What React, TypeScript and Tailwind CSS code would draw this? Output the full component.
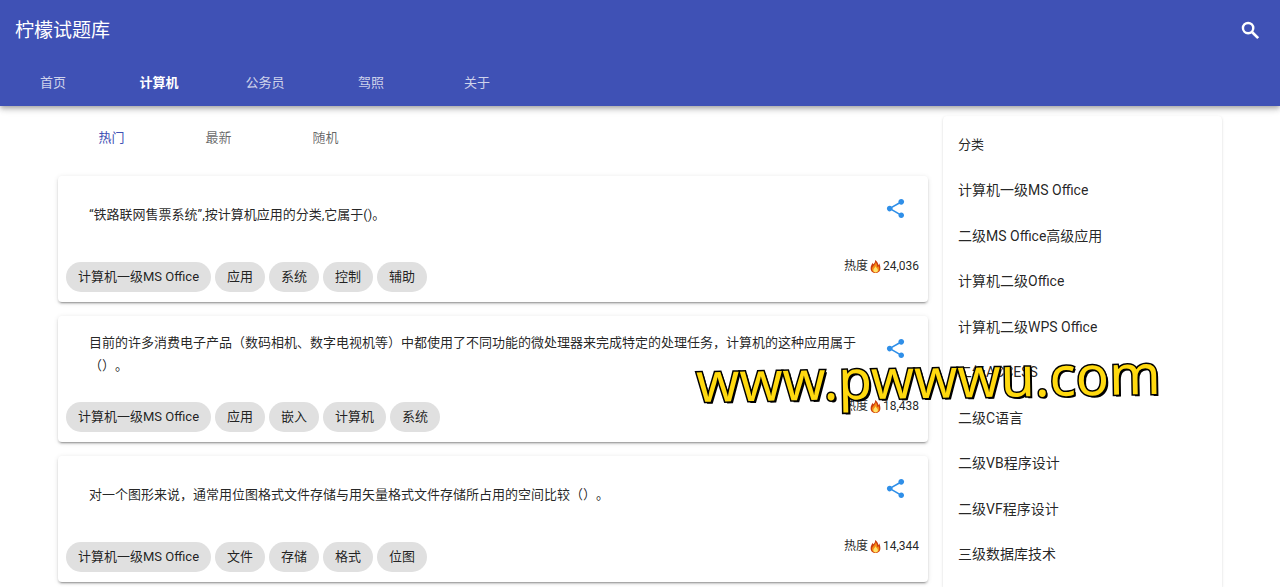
import { useState } from "react";
import { MdShare } from "react-icons/md";

const sections = ["首页", "计算机", "公务员", "驾照", "关于"];
const orders = ["热门", "最新", "随机"];

const categories = [
  "计算机一级MS Office",
  "二级MS Office高级应用",
  "计算机二级Office",
  "计算机二级WPS Office",
  "二级ACCESS",
  "二级C语言",
  "二级VB程序设计",
  "二级VF程序设计",
  "三级数据库技术",
];

type Question = { text: string; tags: string[]; heat: string };

const questions: Question[] = [
  {
    text: "“铁路联网售票系统”,按计算机应用的分类,它属于()。",
    tags: ["计算机一级MS Office", "应用", "系统", "控制", "辅助"],
    heat: "24,036",
  },
  {
    text: "目前的许多消费电子产品（数码相机、数字电视机等）中都使用了不同功能的微处理器来完成特定的处理任务，计算机的这种应用属于（）。",
    tags: ["计算机一级MS Office", "应用", "嵌入", "计算机", "系统"],
    heat: "18,438",
  },
  {
    text: "对一个图形来说，通常用位图格式文件存储与用矢量格式文件存储所占用的空间比较（）。",
    tags: ["计算机一级MS Office", "文件", "存储", "格式", "位图"],
    heat: "14,344",
  },
];

function Flame() {
  return (
    <svg viewBox="0 0 24 24" className="mx-px size-[13px] shrink-0" aria-hidden="true">
      <path
        d="M11 0c1 4-1 6-3 8-.6-1-.8-2-.7-3C4.500 8 3 11.500 3 15.500 3 20.500 7 24 12 24s9-3.500 9-8.500c0-4-1-7-2.500-9.500 0 1.500-.5 2.800-1.500 3.500C17 5.500 15 2 11 0z"
        fill="#c93a10"
      />
      <path
        d="M12 4c.5 4-5.500 6.500-6.500 11.500C4.800 19.500 8 23 12 23s7.500-3 7-7.500c-.3-2-1-3.500-2-4.500-.2 1.200-.8 2-1.800 2.500C15.500 10 14.500 6.500 12 4z"
        fill="#f58a14"
      />
      <path d="M12 11c0 3-4 4.500-4 8 0 2.500 2 4 4.300 4s4.200-1.700 4.200-4c0-3.500-3.500-4.500-4.500-8z" fill="#ffe36b" />
    </svg>
  );
}

function SearchIcon() {
  return (
    <svg viewBox="0 0 24 24" className="size-[23px]" fill="none" stroke="currentColor" aria-hidden="true">
      <circle cx="9.500" cy="9.500" r="5.400" strokeWidth="2.500" />
      <path d="M13.800 13.800 20 20" strokeWidth="2.800" />
    </svg>
  );
}

function QuestionCard({ text, tags, heat }: Question) {
  return (
    <article className="flex min-h-[126px] justify-between rounded bg-white shadow-[0_3px_1px_-2px_rgba(0,0,0,0.2),0_2px_2px_0_rgba(0,0,0,0.14),0_1px_5px_0_rgba(0,0,0,0.12)]">
      <div className="flex min-w-0 flex-1 flex-col gap-[10px] pb-[10px] pl-2">
        <div className="flex min-h-[76px] items-center pl-[23px]">
          <a href="#question" className="text-[13px] leading-[23px] [text-spacing-trim:space-all]">
            {text}
          </a>
        </div>
        <ul className="flex flex-wrap gap-1">
          {tags.map((tag) => (
            <li key={tag}>
              <a
                href="#tag"
                className="flex h-[30px] items-center rounded-full bg-[#e0e0e0] px-3 text-[13px] leading-5"
              >
                {tag}
              </a>
            </li>
          ))}
        </ul>
      </div>
      <div className="flex shrink-0 flex-col items-end gap-9 pr-[9px] pt-[21px]">
        <button type="button" aria-label="分享" className="mr-3 text-[#2f8fe8]">
          <MdShare className="size-[23px]" />
        </button>
        <p className="-ml-10 flex items-center text-[12px] leading-5">
          热度
          <Flame />
          {heat}
        </p>
      </div>
    </article>
  );
}

export default function App() {
  const [section, setSection] = useState("计算机");
  const [order, setOrder] = useState("热门");

  return (
    <div className="relative flex min-h-screen flex-col overflow-hidden bg-white font-[Roboto,'Noto_Sans_CJK_SC',sans-serif] text-black/87">
      <header className="z-10 bg-[#3f51b5] text-white shadow-[0_2px_4px_-1px_rgba(0,0,0,0.2),0_4px_5px_0_rgba(0,0,0,0.14),0_1px_10px_0_rgba(0,0,0,0.12)]">
        <div className="flex h-[61px] items-center justify-between pl-[15px] pr-[18px]">
          <h1 className="text-[19px] leading-7">柠檬试题库</h1>
          <button type="button" aria-label="搜索">
            <SearchIcon />
          </button>
        </div>
        <nav className="flex h-[45px] pb-0.5">
          {sections.map((name) => (
            <button
              key={name}
              type="button"
              onClick={() => setSection(name)}
              className={
                name === section
                  ? "w-[106px] text-[13px] font-bold text-white"
                  : "w-[106px] text-[13px] text-white/75"
              }
            >
              {name}
            </button>
          ))}
        </nav>
      </header>

      <div className="grid flex-1 grid-cols-[870fr_279fr] gap-[15px] px-[58px]">
        <main className="pt-[9px]">
          <div className="flex h-[45px]">
            {orders.map((name) => (
              <button
                key={name}
                type="button"
                onClick={() => setOrder(name)}
                className={
                  name === order
                    ? "w-[107px] text-[13px] text-[#3f51b5]"
                    : "w-[107px] text-[13px] text-black/60"
                }
              >
                {name}
              </button>
            ))}
          </div>
          <div className="mt-4 flex flex-col gap-[14px]">
            {questions.map((question) => (
              <QuestionCard key={question.text} {...question} />
            ))}
          </div>
        </main>

        <aside className="mt-[10px] rounded-t bg-white px-[15px] pt-[6px] text-[14px] leading-5 shadow-[0_2px_1px_-1px_rgba(0,0,0,0.2),0_1px_1px_0_rgba(0,0,0,0.14),0_1px_3px_0_rgba(0,0,0,0.12)]">
          <div className="grid min-h-[455px] auto-rows-fr items-center">
            <h2 className="text-[13px]">分类</h2>
            {categories.map((name) => (
              <a key={name} href="#category">
                {name}
              </a>
            ))}
          </div>
        </aside>
      </div>

      <p className="pointer-events-none absolute left-[696px] top-[341px] z-20 -rotate-1 whitespace-nowrap font-['Noto_Sans',sans-serif] text-[55px] font-normal leading-[72px] text-[#ffd90f] [-webkit-text-stroke:3px_#000] [paint-order:stroke_fill] [text-shadow:2px_2px_0_#000]">
        www.pwwwu.com
      </p>
    </div>
  );
}
